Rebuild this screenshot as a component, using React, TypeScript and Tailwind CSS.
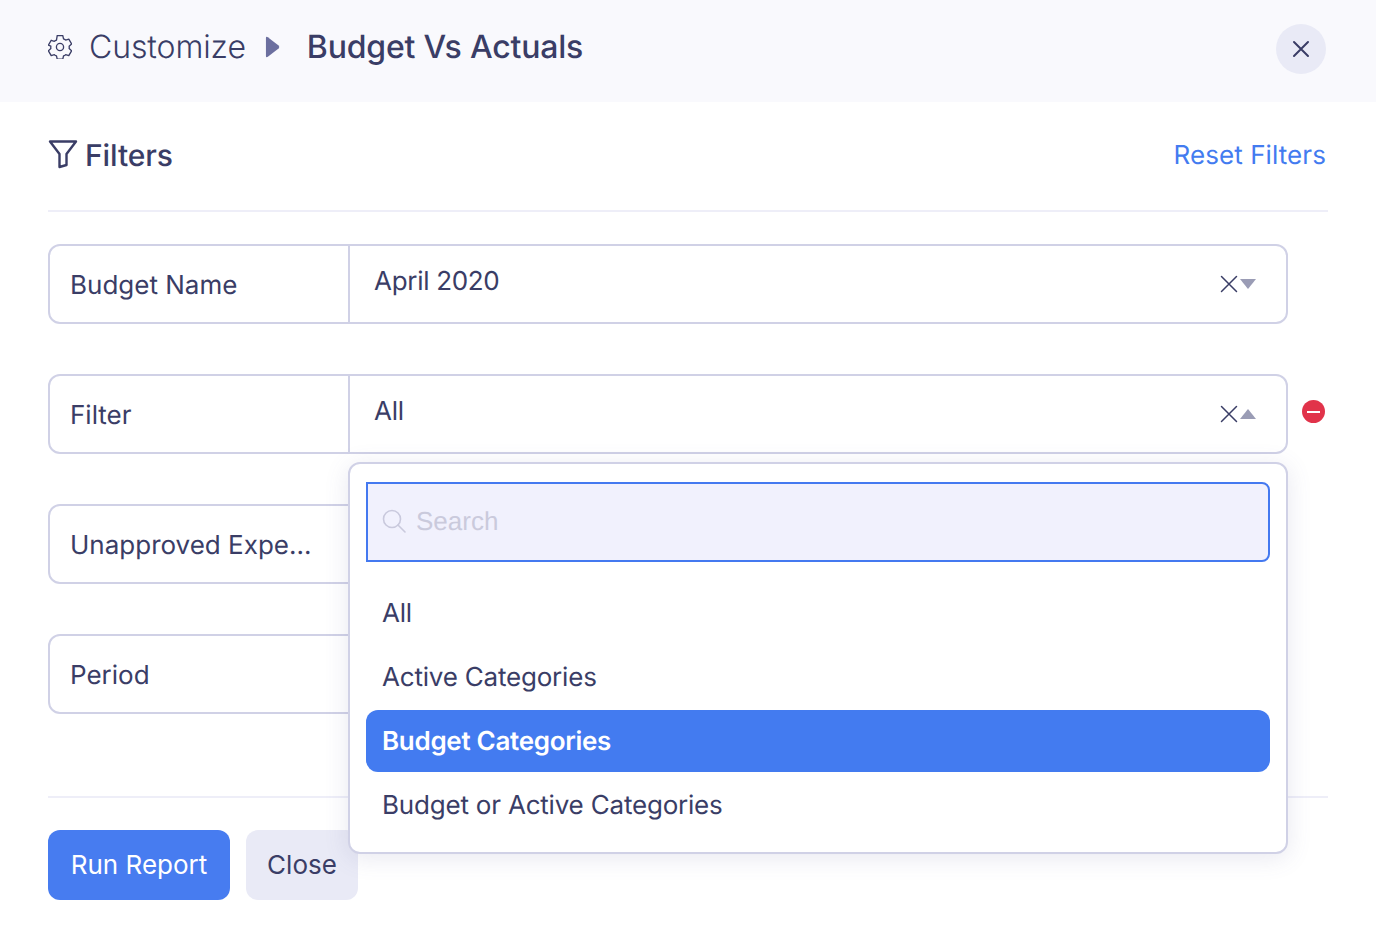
import React from "react";

const ink = "text-[#3a3d66]";

function Clear() {
  return (
    <svg width="18" height="18" viewBox="0 0 18 18" fill="none" stroke="#3a3d66" strokeWidth="1.5" strokeLinecap="round">
      <path d="M1.5 1.5 L16.5 16.5 M16.5 1.5 L1.5 16.5" />
    </svg>
  );
}

function Caret({ up }: { up?: boolean }) {
  return (
    <svg width="16" height="10" viewBox="0 0 16 10" fill="#9a9cb5">
      {up ? <path d="M8 0 L16 10 L0 10 Z" /> : <path d="M0 0 L16 0 L8 10 Z" />}
    </svg>
  );
}

function Field({ label, value, up, children }: { label: string; value?: string; up?: boolean; children?: React.ReactNode }) {
  return (
    <div className="relative flex h-20 w-[1240px] rounded-xl border-2 border-[#d0d1e6] bg-white">
      <div className={`flex w-[300px] shrink-0 items-center border-r-2 border-[#d0d1e6] pl-5 pt-[2px] text-[26px] ${ink}`}>{label}</div>
      {value && (
        <div className={`flex flex-1 items-center justify-between pb-[6px] pl-6 pr-[30px] text-[26px] ${ink}`}>
          <span className="tracking-[-0.3px]">{value}</span>
          <span className="mt-[6px] flex items-center gap-[2px]">
            <Clear />
            <Caret up={up} />
          </span>
        </div>
      )}
      {children}
    </div>
  );
}

function Menu() {
  return (
    <div className="absolute left-[298px] top-[86px] z-10 w-[940px] rounded-xl border-2 border-[#d0d1e6] bg-white px-4 pb-4 pt-[18px] shadow-[0_4px_24px_rgba(90,90,150,0.14)]">
      <div className="flex h-20 items-center gap-[10px] rounded-r-lg border-2 border-[#4479f0] bg-[#f1f1fd] pb-[1px] pl-[14px] pr-4">
        <svg className="mb-[2px]" width="24" height="24" viewBox="0 0 24 24" fill="none" stroke="#c9c9dd" strokeWidth="1.6" strokeLinecap="round">
          <circle cx="10" cy="10" r="8.5" />
          <path d="M16 16 L23 23" />
        </svg>
        <span className="font-['Liberation_Sans',sans-serif] text-[26px] text-[#cacadc]">Search</span>
      </div>
      <ul className={`mt-5 flex flex-col gap-[2px] text-[26px] tracking-[-0.2px] ${ink}`}>
        <li className="flex h-[62px] items-center rounded-xl px-4">All</li>
        <li className="flex h-[62px] items-center rounded-xl px-4">Active Categories</li>
        <li className="flex h-[62px] items-center rounded-xl bg-[#437bf0] px-4 font-semibold tracking-[-0.3px] text-white">Budget Categories</li>
        <li className="flex h-[62px] items-center rounded-xl px-4">Budget or Active Categories</li>
      </ul>
    </div>
  );
}

export default function App() {
  return (
    <div className="h-[930px] w-[1376px] overflow-hidden bg-white font-['Inter',sans-serif] antialiased [text-rendering:geometricPrecision]">
      <header className="flex h-[102px] items-center justify-between bg-[#f9f9fd] pb-1 pl-12 pr-[50px]">
        <div className="flex items-center pb-1">
          <svg width="24" height="24" viewBox="2 2 20 20" fill="none" stroke="#3a3d66" strokeWidth="1.1" strokeLinejoin="round">
            <path d="M9.67 2.5 h4.66 l.6 2.7 a7.3 7.3 0 0 1 1.76 1.02 l2.64-.83 2.33 4.03-2.04 1.87 a7.3 7.3 0 0 1 0 2.04 l2.04 1.87-2.33 4.03-2.64-.83 a7.3 7.3 0 0 1-1.76 1.02 l-.6 2.7 h-4.66 l-.6-2.7 a7.3 7.3 0 0 1-1.76-1.02 l-2.64.83-2.33-4.03 2.04-1.87 a7.3 7.3 0 0 1 0-2.04 L2.34 10.42 4.67 6.39 l2.64.83 a7.3 7.3 0 0 1 1.76-1.02 z" />
            <circle cx="12" cy="12" r="3" />
          </svg>
          <span className={`ml-[17px] text-[32px] font-light tracking-[-0.1px] ${ink}`}>Customize</span>
          <svg className="ml-[19px]" width="15" height="24" viewBox="0 0 16 24" fill="#6c6f9f">
            <path d="M1 2.5 Q1 0.5 3 1.5 L14.5 10.5 Q16 12 14.5 13.5 L3 22.5 Q1 23.5 1 21.5 Z" />
          </svg>
          <span className={`ml-[27px] text-[32px] font-medium tracking-[-0.2px] ${ink}`}>Budget Vs Actuals</span>
        </div>
        <button className="flex h-[50px] w-[50px] items-center justify-center rounded-full bg-[#e9eaf6]">
          <svg width="18" height="18" viewBox="0 0 18 18" fill="none" stroke="#3a3d66" strokeWidth="2" strokeLinecap="round">
            <path d="M2 2 L16 16 M16 2 L2 16" />
          </svg>
        </button>
      </header>

      <main className="px-12">
        <div className="flex h-[110px] items-center justify-between border-b-2 border-[#eeeef8] pb-[2px] pr-[2px]">
          <div className="flex items-center gap-[7px]">
            <svg className="mb-[2px]" width="30" height="30" viewBox="0 0 30 30" fill="none" stroke="#3a3d66" strokeWidth="2.4" strokeLinejoin="round">
              <path d="M2 2.5 H28 L18.5 15 V26 L11.5 28 V15 Z" />
            </svg>
            <h2 className={`pt-[2px] text-[30px] font-medium tracking-[-0.1px] ${ink}`}>Filters</h2>
          </div>
          <a className="text-[26px] tracking-[0.08px] text-[#437bf0]">Reset Filters</a>
        </div>

        <div className="mt-8 flex flex-col gap-[50px]">
          <Field label="Budget Name" value="April 2020" />
          <div className="flex items-start">
            <Field label="Filter" value="All" up>
              <Menu />
            </Field>
            <span className="ml-[14px] mt-[26px] flex h-[23px] w-[23px] items-center justify-center rounded-full bg-[#e1334a]">
              <span className="h-[2px] w-[13px] bg-white" />
            </span>
          </div>
          <Field label="Unapproved Expe..." />
          <Field label="Period" />
        </div>

        <div className="mt-[82px] h-[2px] w-[1280px] bg-[#eeeef8]" />

        <div className="mt-8 flex gap-4 text-[26px]">
          <button className="flex h-[70px] w-[182px] items-center justify-center rounded-xl bg-[#477cf0] pb-[2px] text-white">Run Report</button>
          <button className={`flex h-[70px] w-[112px] items-center justify-center rounded-xl bg-[#e9eaf6] pb-[2px] ${ink}`}>Close</button>
        </div>
      </main>
    </div>
  );
}
